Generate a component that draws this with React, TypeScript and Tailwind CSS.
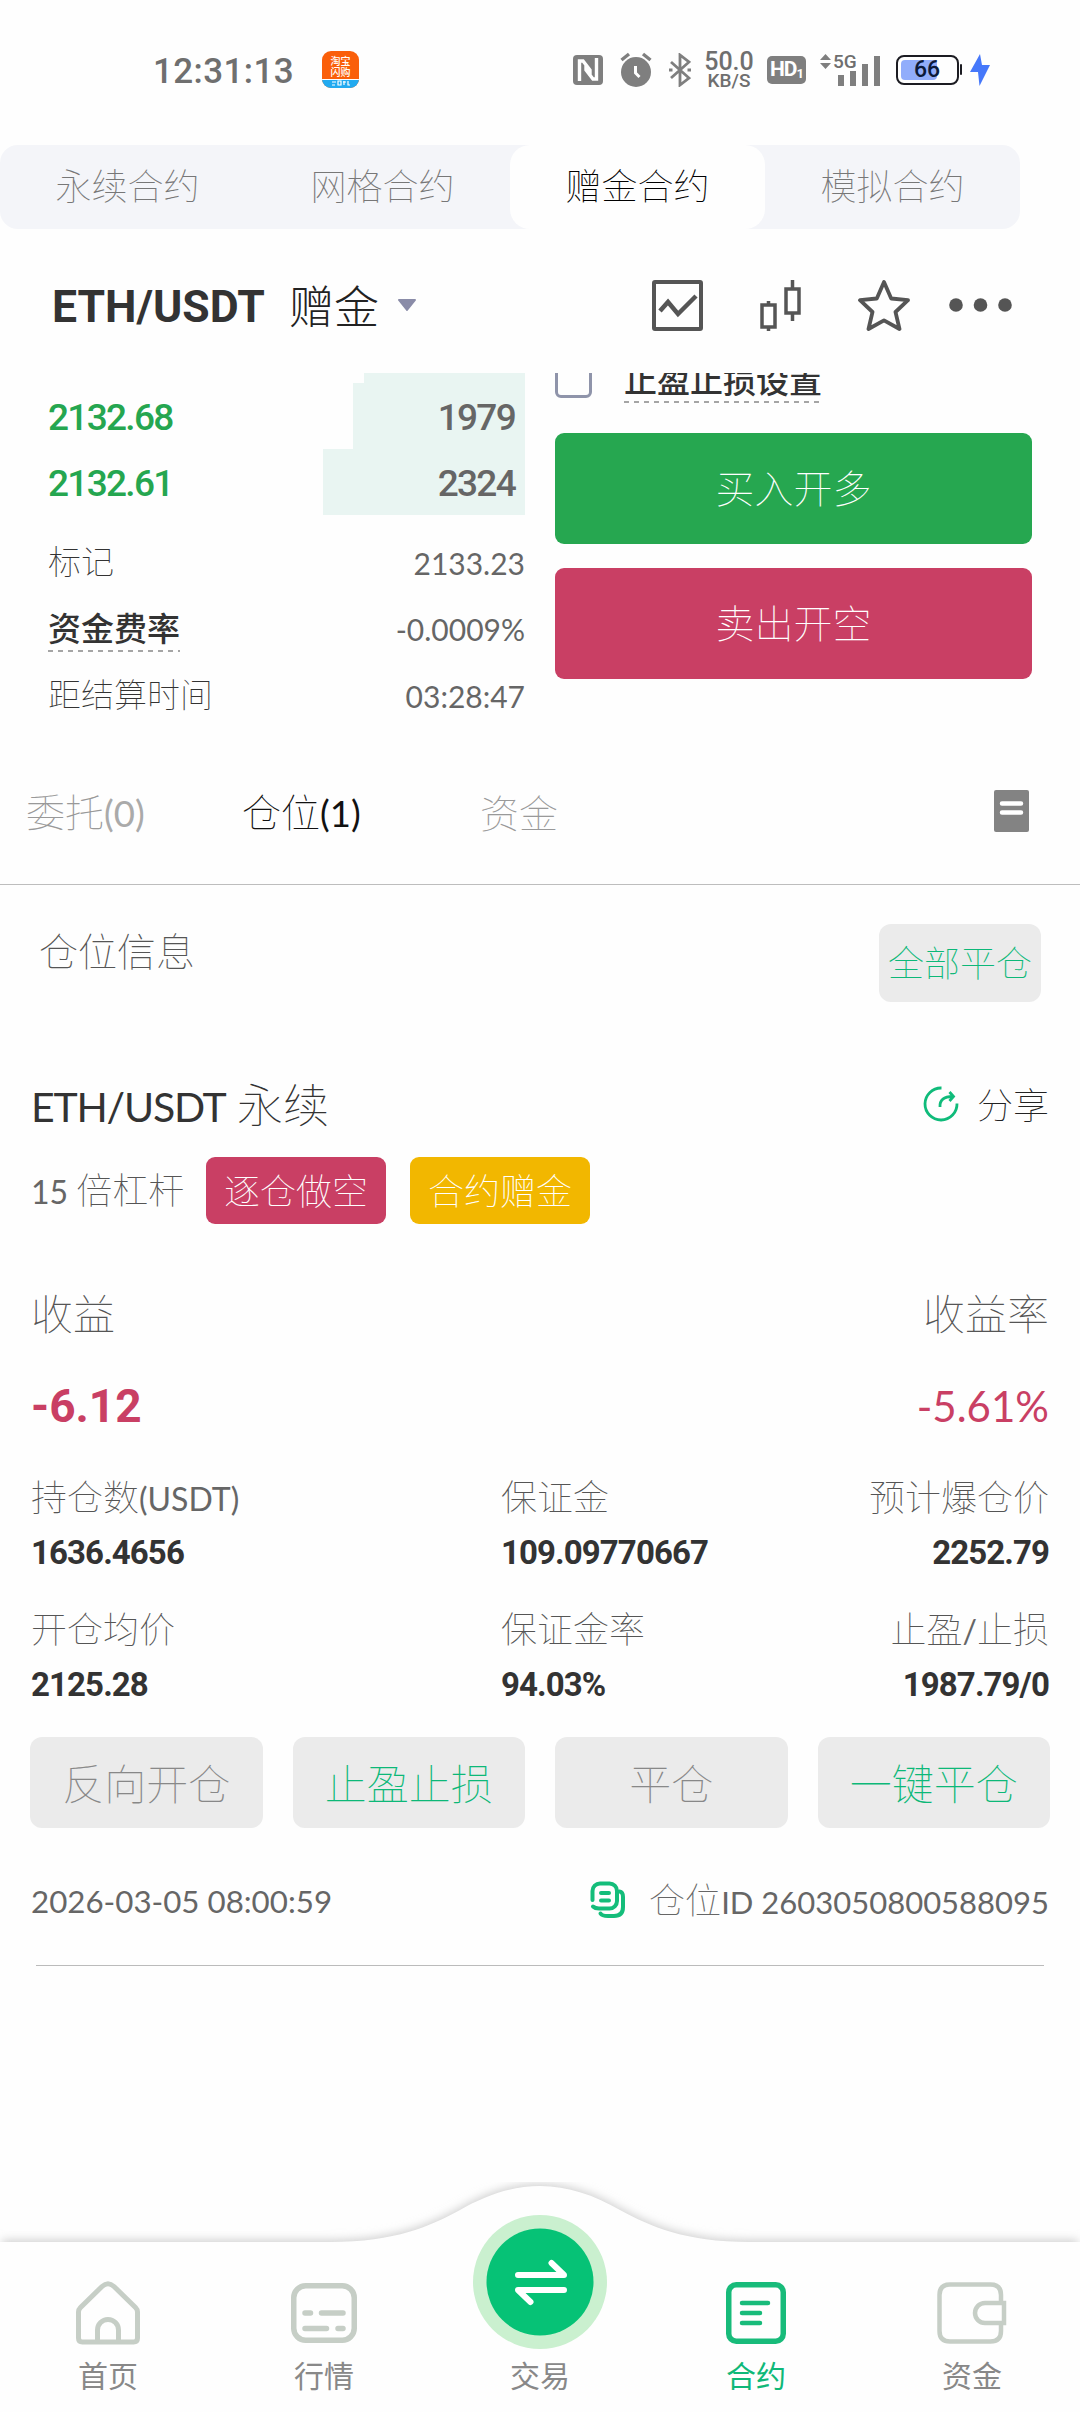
import type { ReactNode } from 'react';

const marketTabs = ['永续合约', '网格合约', '赠金合约', '模拟合约'];

const bids = [
  { price: '2132.68', amount: '1979', depth: 172 },
  { price: '2132.61', amount: '2324', depth: 202 },
];

const actions = [
  { label: '反向开仓', green: false },
  { label: '止盈止损', green: true },
  { label: '平仓', green: false },
  { label: '一键平仓', green: true },
];

// Latin runs sit next to larger Chinese glyphs
function Latin({ children, className = '' }: { children: ReactNode; className?: string }) {
  return <span className={`font-[Lato] font-normal ${className}`}>{children}</span>;
}

function StatusBar() {
  return (
    <div className="flex h-[145px] items-center pb-[6px] pl-[153px] text-[#6f6f6f]">
      <div className="w-[169px] pt-[4px] font-[Roboto] text-[35px] font-medium leading-none tracking-[0.400px]">12:31:13</div>
      <div className="flex h-[37px] w-[37px] flex-col overflow-hidden rounded-[9px] bg-[#fa5f0a] text-center">
        <span className="pt-[4px] text-[10px] font-medium leading-[11px] text-white">淘宝<br />闪购</span>
        <div className="mt-[2px] flex flex-1 items-start justify-center border-t border-white bg-[#22aaf0]">
          <svg width="20" height="6" viewBox="0 0 20 6" stroke="#fff" strokeWidth="1.2" fill="none">
            <path d="M1 2h4M1 5h3M7 1v4h3V1zM12 2h3M13 1v4M17 1v4h2" />
          </svg>
        </div>
      </div>

      <svg className="ml-[214px]" width="30" height="30" viewBox="0 0 30 30">
        <rect width="30" height="30" rx="4" fill="#7f7f7f" />
        <path d="M6.500 26V6h3.500l7 9v6M23.500 3v21H20l-7-9V9" fill="none" stroke="#fff" strokeWidth="3.400" />
      </svg>
      <svg className="ml-[17px]" width="32" height="36" viewBox="0 0 32 36">
        <circle cx="16" cy="20" r="15" fill="#7f7f7f" />
        <path d="M1.500 8 9 2M30.500 8 23 2" stroke="#7f7f7f" strokeWidth="3.400" />
        <path d="M15.500 14v7l4 4" fill="none" stroke="#fff" strokeWidth="3" />
      </svg>
      <svg className="ml-[17px]" width="22" height="34" viewBox="0 0 22 34" fill="none" stroke="#7f7f7f" strokeWidth="2.800">
        <path d="m2 9 18 16-9 7V2l9 7L2 25" />
        <path d="M0 17h3.500M18.500 17H22" strokeWidth="3" />
      </svg>
      <div className="ml-[11px] flex w-[54px] flex-col items-center font-[Roboto] font-medium">
        <span className="text-[25px] leading-[22px]">50.0</span>
        <span className="text-[19px] leading-[16px]">KB/S</span>
      </div>
      <div className="ml-[11px] flex h-[28px] w-[39px] items-center justify-center rounded-[5px] bg-[#7f7f7f] font-[Roboto] text-[21px] font-bold leading-none tracking-[-1px] text-white">
        HD<span className="mt-[7px] text-[13px]">1</span>
      </div>
      <div className="relative ml-[14px] h-[34px] w-[62px]">
        <svg width="62" height="34" viewBox="0 0 62 34" fill="#7f7f7f">
          <path d="M0 7l5.500-6L11 7zM0 10h11l-5.500 6z" />
          <path d="M18 22h6v11h-6zM30 18h6v15h-6zM42 11h6v22h-6zM54 3h6v30h-6z" />
        </svg>
        <span className="absolute left-[13px] top-0 bg-white font-[Roboto] text-[19px] font-medium leading-[17px]">5G</span>
      </div>
      <div className="ml-[14px] flex h-[30px] w-[63px] items-center rounded-[8px] border-2 border-[#1c1c22] p-[3px]">
        <div className="h-[20px] w-[36px] rounded-[4px] bg-[#91adfb]" />
        <span className="-ml-[23px] font-[Roboto] text-[23px] font-medium leading-none text-[#0c1a3a]">66</span>
      </div>
      <div className="ml-[1px] h-[11px] w-[2px] rounded-sm bg-[#1c1c22]" />
      <svg className="ml-[8px]" width="20" height="32" viewBox="0 0 20 32">
        <path d="M10 0 0 18h8l1.500 14L20 11h-8z" fill="#4678fa" />
      </svg>
    </div>
  );
}

function PairHeader() {
  return (
    <div className="flex h-[144px] items-center pb-[4px] pl-[52px] pt-[12px]">
      <span className="w-[237px] pt-[5px] font-[Roboto] text-[44.500px] font-bold leading-none text-[#333]">ETH/USDT</span>
      <span className="mb-[1px] text-[45px] font-light leading-none text-[#222]">赠金</span>
      <svg className="ml-[18px]" width="20" height="12" viewBox="0 0 20 12">
        <path d="M2 1h16L10 11z" fill="#8a8ca8" stroke="#8a8ca8" strokeWidth="2" strokeLinejoin="round" />
      </svg>
      <svg className="ml-[235px]" width="51" height="51" viewBox="0 0 51 51" fill="none" stroke="#555">
        <rect x="2" y="2" width="47" height="47" rx="1" strokeWidth="4" />
        <path d="m8 31 8-9 10 12 18-18" strokeWidth="4.500" />
      </svg>
      <svg className="ml-[57px]" width="42" height="51" viewBox="0 0 42 51" fill="none" stroke="#555" strokeWidth="3.500">
        <path d="M2 25h13v22H2zM8.500 21v4M8.500 47v4M26 9h13v24H26zM32.500 0v9M32.500 33v8" />
      </svg>
      <svg className="ml-[56px]" width="52" height="51" viewBox="0 0 52 51" fill="none" stroke="#555" strokeWidth="3.800" strokeLinejoin="round">
        <path d="m26 2 7.200 16.500L50 20.200 37.500 32 41.500 49 26 40.300 10.500 49l4-17L2 20.200l16.800-1.700z" />
      </svg>
      <svg className="ml-[39px]" width="63" height="14" viewBox="0 0 63 14" fill="#555">
        <circle cx="7" cy="7" r="6.800" />
        <circle cx="31.500" cy="7" r="6.800" />
        <circle cx="56" cy="7" r="6.800" />
      </svg>
    </div>
  );
}

function DashLine({ width }: { width: number }) {
  return (
    <svg className="block" width={width} height="2" viewBox={`0 0 ${width} 2`}>
      <path d={`M0 1H${width}`} stroke="#888" strokeWidth="1.500" strokeDasharray="5 5" />
    </svg>
  );
}

function InfoRow({ label, value, strong }: { label: string; value: string; strong?: boolean }) {
  return (
    <div className="flex h-[66.500px] items-center justify-between">
      {strong ? (
        <div className="pt-[4px]">
          <div className="text-[33px] font-medium leading-[37px] text-[#333]">{label}</div>
          <div className="pt-[4px]"><DashLine width={132} /></div>
        </div>
      ) : (
        <span className="pb-[4px] text-[33px] leading-none text-[#333]">{label}</span>
      )}
      <Latin className="pt-[1px] text-[30px] leading-none text-[#666]">{value}</Latin>
    </div>
  );
}

function TradePanel() {
  return (
    <div className="flex h-[360px] overflow-hidden">
      <div className="w-[477px]">
        <div className="ml-[364px] h-[10px] w-[161px] bg-[#e9f5f2]" />
        {bids.map(b => (
          <div key={b.price} className="flex h-[66px] w-[525px] items-center justify-between pl-[48px] font-[Roboto] text-[37px] font-medium leading-none tracking-[-1.700px]">
            <span className="pt-[3px] text-[#25a650]">{b.price}</span>
            <div className="flex h-full items-center justify-end bg-[#e9f5f2] pr-[10px] pt-[3px] text-[#666]" style={{ width: b.depth }}>
              {b.amount}
            </div>
          </div>
        ))}
        <div className="ml-[48px] mt-[14px] w-[477px]">
          <InfoRow label="标记" value="2133.23" />
          <InfoRow label="资金费率" value="-0.0009%" strong />
          <InfoRow label="距结算时间" value="03:28:47" />
        </div>
      </div>

      <div className="ml-[78px] w-[477px]">
        <div className="-mt-[12px] flex h-[72px] items-start">
          <div className="h-[37px] w-[37px] rounded-[6px] border-[3px] border-[#8f94aa]" />
          <div className="ml-[32px]">
            <div className="text-[33px] font-medium leading-[37px] text-[#333]">止盈止损设置</div>
            <div className="pt-[3px]"><DashLine width={197} /></div>
          </div>
        </div>
        <div className="flex h-[111px] items-center justify-center rounded-[9px] bg-[#26a750] pb-[4px] text-[39px] text-white">买入开多</div>
        <div className="mt-[24px] flex h-[111px] items-center justify-center rounded-[9px] bg-[#c93f64] pb-[4px] text-[39px] text-white">卖出开空</div>
      </div>
    </div>
  );
}

function PositionTabs() {
  return (
    <div className="flex h-[152px] items-center border-b border-[#bdbdbd] pl-[26px] pt-[6px] text-[39px] leading-none text-[#999]">
      <span className="w-[216px]">委托<Latin className="text-[36.500px] text-[#aaa]">(0)</Latin></span>
      <span className="w-[238px] text-[#111]">仓位<Latin className="text-[36.500px]">(1)</Latin></span>
      <span>资金</span>
      <svg className="mb-[1px] ml-[436px]" width="35" height="42" viewBox="0 0 35 42">
        <rect width="35" height="42" rx="2" fill="#838383" />
        <path d="M8 13.500h19M8 22.500h19" stroke="#fff" strokeWidth="4.500" strokeLinecap="round" />
      </svg>
    </div>
  );
}

function Stat({ label, value, right }: { label: ReactNode; value: string; right?: boolean }) {
  return (
    <div className={right ? 'text-right' : ''}>
      <div className="h-[58px] whitespace-nowrap text-[36px] leading-[54px] text-[#555]">{label}</div>
      <div className="h-[54px] font-[Roboto] text-[33px] font-bold leading-[54px] tracking-[-0.900px] text-[#333]">{value}</div>
    </div>
  );
}

function Position() {
  return (
    <div className="px-[31px] text-[#555]">
      <div className="flex h-[90px] items-center justify-between pb-[5px]">
        <div className="flex items-baseline leading-none text-[#333]">
          <Latin className="w-[206px] text-[41px] tracking-[-1.200px]">ETH/USDT</Latin>
          <span className="text-[46px]">永续</span>
        </div>
        <div className="flex items-center">
          <svg className="mr-[18px] mt-[3px]" width="36" height="36" viewBox="0 0 36 36" fill="none" stroke="#0fbb7a" strokeWidth="2.800">
            <path d="M18.500 2A16 16 0 1 0 34 17.500" />
            <path d="M17 21c-.5-7 4-10.500 12.500-10.500M26.500 6l4 4.500-4 4.500" />
          </svg>
          <span className="text-[36px] leading-none text-[#222]">分享</span>
        </div>
      </div>

      <div className="mt-[7px] flex h-[67px] items-center leading-none">
        <span className="w-[175px] whitespace-nowrap pb-[4px] text-[36px]"><Latin className="text-[32px] text-[#666]">15 </Latin>倍杠杆</span>
        <div className="flex h-full w-[180px] items-center justify-center rounded-[9px] bg-[#c93f64] pb-[4px] text-[36px] text-white">逐仓做空</div>
        <div className="ml-[24px] flex h-full w-[180px] items-center justify-center rounded-[9px] bg-[#f2b700] pb-[4px] text-[36px] text-white">合约赠金</div>
      </div>

      <div className="mt-[40px] flex h-[96px] items-center justify-between text-[42px] leading-none">
        <span>收益</span>
        <span>收益率</span>
      </div>
      <div className="flex h-[92px] items-center justify-between text-[#c93f64]">
        <span className="font-[Roboto] text-[46px] font-bold leading-none">-6.12</span>
        <Latin className="text-[42px] leading-none">-5.61%</Latin>
      </div>

      <div className="mt-[16px] grid grid-cols-[470px_1fr_auto] gap-y-[20px]">
        <Stat label={<>持仓数<Latin className="text-[32px] text-[#666]">(USDT)</Latin></>} value="1636.4656" />
        <Stat label="保证金" value="109.09770667" />
        <Stat label="预计爆仓价" value="2252.79" right />
        <Stat label="开仓均价" value="2125.28" />
        <Stat label="保证金率" value="94.03%" />
        <Stat label={<>止盈<Latin className="text-[32px] text-[#666]">/</Latin>止损</>} value="1987.79/0" right />
      </div>

      <div className="-mx-px mt-[25px] grid grid-cols-4 gap-[30px]">
        {actions.map(a => (
          <div
            key={a.label}
            className={`flex h-[91px] items-center justify-center rounded-[12px] bg-[#ebebeb] pb-[2px] text-[42px] leading-none ${a.green ? 'text-[#0cb878]' : 'text-[#888]'}`}
          >
            {a.label}
          </div>
        ))}
      </div>

      <div className="mt-[25px] flex h-[94px] items-center leading-none text-[#666]">
        <Latin className="flex-1 pt-[4px] text-[31.300px]">2026-03-05 08:00:59</Latin>
        <svg className="mr-[23px]" width="36" height="38" viewBox="0 0 36 38" fill="none" stroke="#14bd7a" strokeWidth="4" strokeLinecap="round">
          <path d="M2.500 19V10a7.500 7.500 0 0 1 7.500-7.500h9.500A7.500 7.500 0 0 1 27 10v10a7.500 7.500 0 0 1-7.500 7.500H9Q5 27.500 3 25.500" />
          <path d="M29.500 10.500Q33 11 33 16v10q0 9-9 9h-6q-6 0-7.500-2.500" />
          <path d="M11 12h8M11 19.500h8" />
        </svg>
        <span className="whitespace-nowrap pb-[2px] text-[36px]">仓位<Latin className="text-[31px]">ID 2603050800588095</Latin></span>
      </div>
      <div className="mx-[5px] mt-[18px] h-px bg-[#bbb]" />
    </div>
  );
}

const homeIcon = (
  <svg width="64" height="64" viewBox="0 0 64 64" fill="none" stroke="#c6cec6" strokeWidth="5">
    <path d="M2.500 31Q2.500 28.500 4.500 26.500L26 5.500q6-5.500 12 0l21.500 21q2 2 2 4.500v26q0 4-4 4h-51q-4 0-4-4z" />
    <path d="M21.500 61V49a10.500 10.500 0 0 1 21 0v12" />
  </svg>
);

const marketIcon = (
  <svg width="66" height="60" viewBox="0 0 66 60" fill="none" stroke="#c6cec6" strokeWidth="5.500" strokeLinecap="round">
    <rect x="2.750" y="2.750" width="60.500" height="54.500" rx="12" />
    <path d="M14 30h5.500M30.500 30H52M14 45.500h21.500M47 45.500h5" />
  </svg>
);

const contractIcon = (
  <svg width="60" height="62" viewBox="0 0 60 62" fill="none" stroke="#18bb7a" strokeWidth="5.500" strokeLinecap="round">
    <rect x="2.750" y="2.750" width="54.500" height="56.500" rx="7.500" />
    <path d="M16 21h26M16 31h18M16 41h18" strokeWidth="4.500" />
  </svg>
);

const walletIcon = (
  <svg width="70" height="62" viewBox="0 0 70 62" fill="none" stroke="#c6cec6" strokeWidth="4.500">
    <path d="M64 20V13Q64 2.500 53.500 2.500H13Q2.500 2.500 2.500 13v36q0 10.500 10.500 10.500h40.500Q64 59.500 64 49v-7" />
    <path d="M67 21H48a10 10 0 0 0 0 20h19z" />
  </svg>
);

const swapIcon = (
  <svg width="134" height="134" viewBox="0 0 134 134" fill="none" stroke="#fff" strokeWidth="6" strokeLinecap="round" strokeLinejoin="round">
    <circle cx="67" cy="67" r="67" fill="#caf0cf" stroke="none" />
    <circle cx="67" cy="67" r="53.500" fill="#06c276" stroke="none" />
    <path d="M45 60h46L78.500 48M91 75H45l12.500 12" />
  </svg>
);

function NavItem({ icon, label, active }: { icon: ReactNode; label: string; active?: boolean }) {
  return (
    <div className="relative flex flex-1 flex-col items-center justify-end">
      <div className="flex h-[64px] items-center justify-center">{icon}</div>
      <span className={`mb-[20px] mt-[11px] text-[30px] font-normal leading-[36px] ${active ? 'text-[#0fb878]' : 'text-[#888]'}`}>{label}</span>
    </div>
  );
}

function BottomNav() {
  return (
    <nav className="relative flex h-[230px]">
      <svg className="absolute inset-0" width="1080" height="230" viewBox="0 0 1080 230">
        <defs>
          <filter id="lift" x="-5%" y="-15%" width="110%" height="130%">
            <feGaussianBlur stdDeviation="5" />
          </filter>
        </defs>
        <path d="M2 58H330C396 58 430 42 460 26C486 11 512 2 540 2S594 11 620 26C650 42 684 58 750 58H1078V90H2z" fill="#cfcfcf" filter="url(#lift)" />
        <path d="M0 60H330C396 60 430 44 460 28C486 13 512 4 540 4S594 13 620 28C650 44 684 60 750 60H1080V230H0z" fill="#fefefe" />
      </svg>
      <NavItem icon={homeIcon} label="首页" />
      <NavItem icon={marketIcon} label="行情" />
      <div className="relative flex flex-1 flex-col items-center pt-[33px]">
        {swapIcon}
        <span className="mt-[7px] text-[30px] font-normal leading-[36px] text-[#888]">交易</span>
      </div>
      <NavItem icon={contractIcon} label="合约" active />
      <NavItem icon={walletIcon} label="资金" />
    </nav>
  );
}

export default function App() {
  return (
    <div className="flex h-[2412px] w-[1080px] flex-col overflow-hidden bg-[#fefefe] font-['Noto_Sans_CJK_SC',sans-serif] font-thin">
      <StatusBar />
      <div className="flex h-[84px] w-[1020px] rounded-[18px] bg-[#f4f5f9]">
        {marketTabs.map((t, i) => (
          <div
            key={t}
            className={`flex flex-1 items-center justify-center pb-[6px] text-[36px] ${i === 2 ? 'rounded-[20px] bg-[#fefefe] text-black' : 'text-[#777]'}`}
          >
            {t}
          </div>
        ))}
      </div>
      <PairHeader />
      <TradePanel />
      <PositionTabs />
      <div className="flex h-[175px] justify-between pl-[39px] pr-[39px] pt-[39px]">
        <span className="text-[39px] leading-[50px] text-[#555]">仓位信息</span>
        <div className="flex h-[78px] w-[162px] items-center justify-center rounded-[12px] bg-[#ebebeb] pb-[5px] text-[36px] leading-none text-[#0cb878]">全部平仓</div>
      </div>
      <Position />
      <div className="flex-1" />
      <BottomNav />
    </div>
  );
}
